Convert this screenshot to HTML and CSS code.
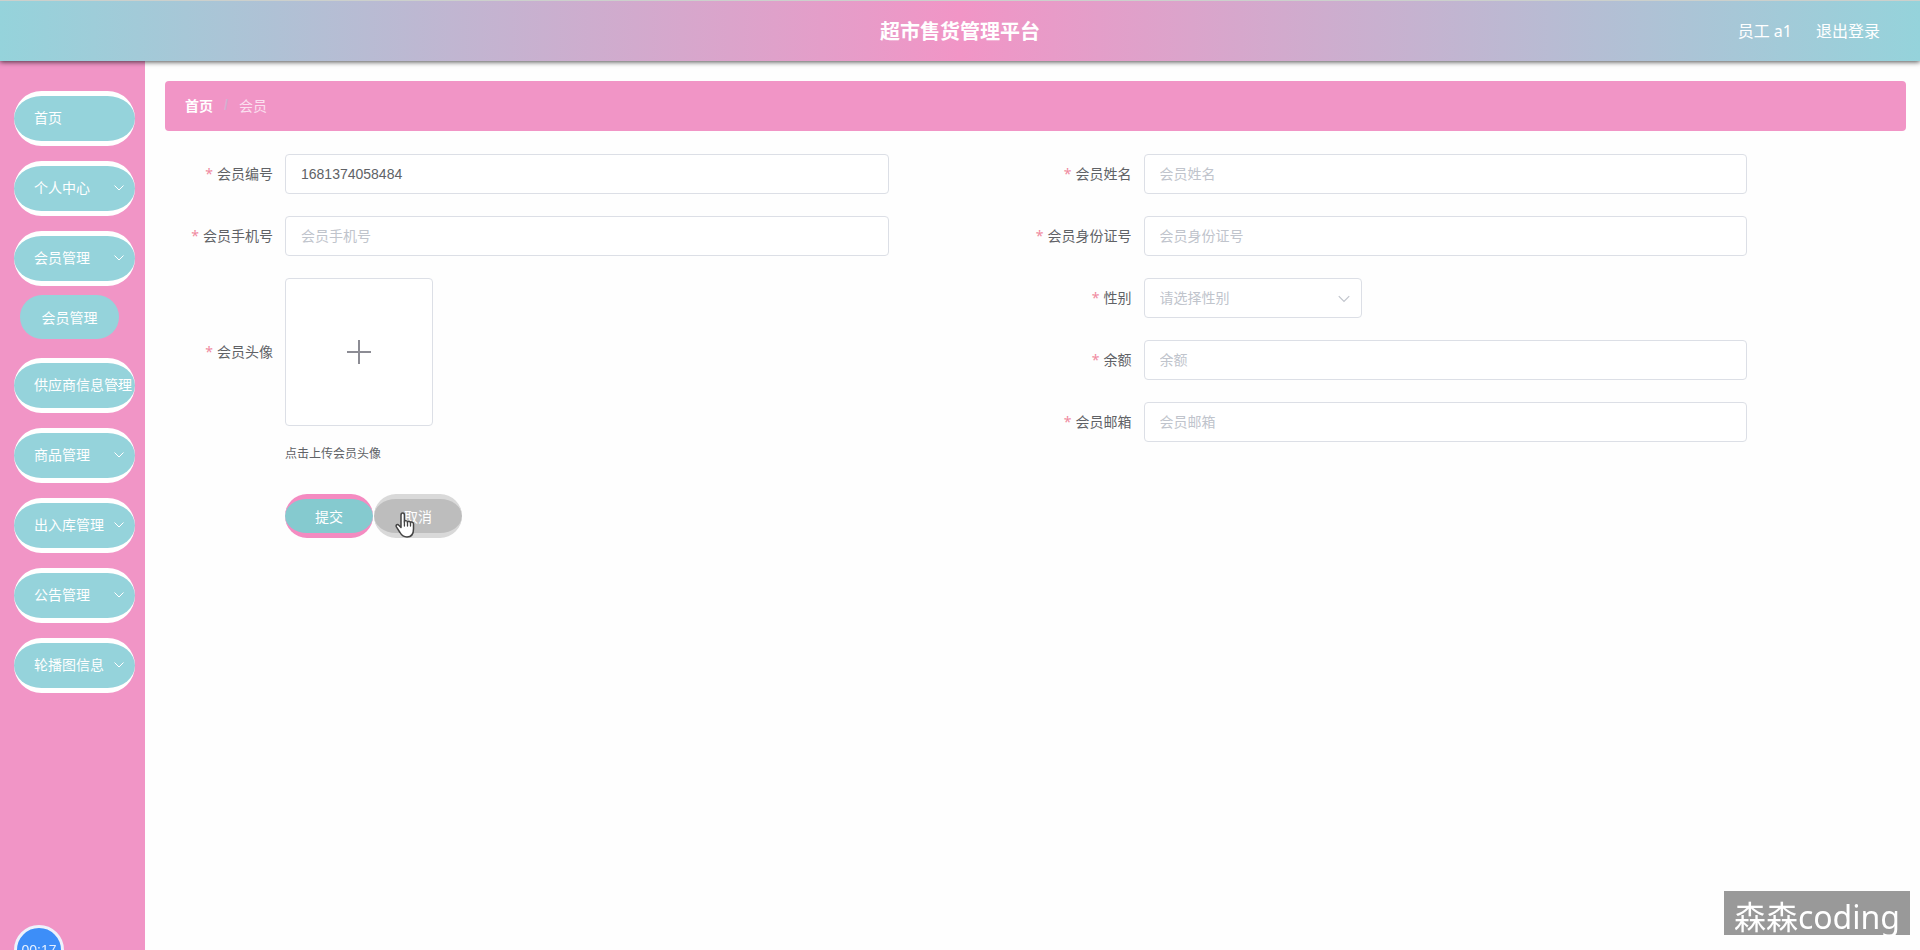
FILE: index.html
```html
<!DOCTYPE html>
<html lang="zh-CN">
<head>
<meta charset="utf-8">
<title>超市售货管理平台</title>
<link rel="stylesheet" href="styles.css">
</head>
<body>
<svg class="sprite" aria-hidden="true">
  <symbol id="chevron" viewBox="0 0 12 12"><path d="M1.500 3.500 6 8l4.500-4.500" fill="none" stroke="currentColor" stroke-width="1"/></symbol>
</svg>
<header class="topbar">
  <h1 class="topbar-title">超市售货管理平台</h1>
  <div class="topbar-user">
    <span>员工 a1</span>
    <a href="#logout">退出登录</a>
  </div>
</header>
<div class="layout">
  <nav class="sidebar">
    <ul class="menu">
      <li><a class="menu-item" href="#home">首页</a></li>
      <li><button type="button" class="menu-item">个人中心<svg class="menu-arrow"><use href="#chevron"/></svg></button></li>
      <li>
        <button type="button" class="menu-item">会员管理<svg class="menu-arrow"><use href="#chevron"/></svg></button>
        <a class="submenu-item" href="#member">会员管理</a>
      </li>
      <li><button type="button" class="menu-item">供应商信息管理<svg class="menu-arrow"><use href="#chevron"/></svg></button></li>
      <li><button type="button" class="menu-item">商品管理<svg class="menu-arrow"><use href="#chevron"/></svg></button></li>
      <li><button type="button" class="menu-item">出入库管理<svg class="menu-arrow"><use href="#chevron"/></svg></button></li>
      <li><button type="button" class="menu-item">公告管理<svg class="menu-arrow"><use href="#chevron"/></svg></button></li>
      <li><button type="button" class="menu-item">轮播图信息<svg class="menu-arrow"><use href="#chevron"/></svg></button></li>
    </ul>
  </nav>
  <main class="content">
    <div class="breadcrumb">
      <a href="#home">首页</a><span class="breadcrumb-sep">/</span><span class="breadcrumb-current">会员</span>
    </div>
    <form class="form">
      <div class="form-columns">
        <div class="form-column">
          <div class="field"><label for="no">会员编号</label><input id="no" type="text" value="1681374058484"></div>
          <div class="field"><label for="phone">会员手机号</label><input id="phone" type="text" placeholder="会员手机号"></div>
          <div class="field">
            <label for="avatar">会员头像</label>
            <button id="avatar" type="button" class="upload" aria-describedby="avatar-tip">
              <svg width="24" height="24" viewBox="0 0 24 24"><path d="M12 0v24M0 12h24" stroke="#8c8c94" stroke-width="2"/></svg>
            </button>
          </div>
          <p id="avatar-tip" class="upload-tip">点击上传会员头像</p>
        </div>
        <div class="form-column">
          <div class="field"><label for="name">会员姓名</label><input id="name" type="text" placeholder="会员姓名"></div>
          <div class="field"><label for="idcard">会员身份证号</label><input id="idcard" type="text" placeholder="会员身份证号"></div>
          <div class="field">
            <label for="sex">性别</label>
            <div class="select-wrap">
              <select id="sex"><option value="">请选择性别</option><option>男</option><option>女</option></select>
              <svg class="select-arrow"><use href="#chevron"/></svg>
            </div>
          </div>
          <div class="field"><label for="balance">余额</label><input id="balance" type="text" placeholder="余额"></div>
          <div class="field"><label for="mail">会员邮箱</label><input id="mail" type="text" placeholder="会员邮箱"></div>
        </div>
      </div>
      <div class="actions">
        <button type="submit" class="btn btn-primary">提交</button>
        <button type="button" class="btn btn-cancel">取消
          <svg class="cursor" width="20" height="26" viewBox="0 0 20 26"><path d="M6 15.500V3.200C6 .4 9.400.4 9.400 3.200V10c0-2 3.100-1.800 3.100.4 0-1.800 3-1.500 3 .6 0-1.500 3-1.300 3 1v5c0 4.500-2 8-6.500 8-4 0-5.500-1.800-7-4.500l-3.600-5.700c-1-2 1.200-3 2.400-1.600z" fill="#fff" stroke="#444" stroke-width="1.500" stroke-linejoin="round"/><path d="M9.400 10v4M12.500 10.400V14M15.500 11v3" stroke="#444" stroke-width="1.300" stroke-linecap="round"/></svg>
        </button>
      </div>
    </form>
  </main>
</div>
<div class="timer">00:17</div>
<div class="watermark">森森coding</div>
</body>
</html>
```
FILE: styles.css
```css
* { box-sizing: border-box; }

body {
  margin: 0;
  min-height: 100vh;
  display: flex;
  flex-direction: column;
  overflow: hidden;
  background: #fefefe;
  color: #606266;
  font-family: "Liberation Sans", "Noto Sans CJK SC", sans-serif;
  font-size: 14px;
}

a { color: inherit; text-decoration: none; }
button, input, select { font: inherit; color: inherit; }
button { cursor: pointer; }
.sprite { display: none; }

.topbar {
  position: relative;
  z-index: 1;
  display: grid;
  grid-template-columns: 1fr auto 1fr;
  align-items: center;
  height: 61px;
  padding: 0 40px;
  border-top: 1px solid #ccd0cc;
  background: linear-gradient(90deg, #95d3db, #f195c6 50%, #95d3db);
  box-shadow: 0 1px 5px rgba(0, 0, 0, 0.7);
  color: #fff;
}
.topbar-title { grid-column: 2; margin: 0; padding-top: 2px; font-size: 20px; line-height: 28px; }
.topbar-user {
  display: flex;
  justify-content: flex-end;
  gap: 24px;
  font-family: "Noto Sans", "Noto Sans CJK SC", sans-serif;
  font-size: 16px;
  line-height: 24px;
}

.layout { flex: 1; display: flex; }

.sidebar {
  flex: none;
  width: 145px;
  padding: 30px 10px 0 14px;
  background: #f195c6;
}
.menu {
  display: flex;
  flex-direction: column;
  gap: 15px;
  margin: 0;
  padding: 0;
  list-style: none;
}
.menu-item {
  position: relative;
  display: flex;
  align-items: center;
  width: 100%;
  height: 55px;
  padding: 0 0 3px 20px;
  border: solid #fff;
  border-width: 5px 0;
  border-radius: 28px;
  background: #95d3db;
  color: #fff;
  white-space: nowrap;
}
.menu-arrow { position: absolute; top: 16px; right: 10px; width: 12px; height: 12px; }
.submenu-item {
  display: flex;
  align-items: center;
  justify-content: center;
  width: 99px;
  height: 44px;
  margin: 9px 0 4px 6px;
  padding-bottom: 1px;
  border-radius: 22px;
  background: #95d3db;
  color: #fff;
}

.content { flex: 1; min-width: 0; padding: 20px 14px 20px 20px; }

.breadcrumb {
  display: flex;
  align-items: center;
  height: 50px;
  padding: 0 20px 2px;
  border-radius: 4px;
  background: #f195c6;
  color: #fff;
}
.breadcrumb a { font-weight: 700; }
.breadcrumb-sep { margin: 0 11px; color: #d3afd0; font-weight: 700; }
.breadcrumb-current { color: #fbe0f0; }

.form { padding: 23px 24px 0 0; }
.form-columns { display: grid; grid-template-columns: 1fr 1fr; }
.form-column { display: flex; flex-direction: column; gap: 22px; }
.field {
  display: grid;
  grid-template-columns: 108px 1fr;
  column-gap: 12px;
  align-items: center;
  padding-right: 135px;
}
.field label { padding-bottom: 2px; text-align: right; white-space: nowrap; }
.field label::before {
  content: "*";
  margin-right: 4px;
  color: #f08aa0;
  font-family: "Noto Sans", sans-serif;
  line-height: 1;
}
.field input, .field select {
  width: 100%;
  height: 40px;
  padding: 0 15px;
  border: 1px solid #dcdfe6;
  border-radius: 4px;
  background: #fff;
  outline: none;
}
.field input::placeholder { color: #c0c4cc; }
.select-wrap { position: relative; width: 218px; }
.field select { appearance: none; color: #c0c4cc; }
.select-arrow { position: absolute; top: 14px; right: 11px; width: 14px; height: 14px; color: #c0c4cc; pointer-events: none; }

.upload {
  display: flex;
  align-items: center;
  justify-content: center;
  width: 148px;
  height: 148px;
  padding: 0;
  border: 1px solid #dcdfe6;
  border-radius: 4px;
  background: #fff;
}
.upload-tip { margin: -4px 0 0 120px; font-size: 12px; line-height: 20px; }

.actions { display: flex; gap: 1px; padding: 30px 0 0 120px; }
.btn {
  position: relative;
  width: 88px;
  height: 44px;
  padding: 0;
  border: solid;
  border-width: 5px 0;
  border-radius: 22px;
  color: #fff;
}
.btn-primary { border-color: #f48bc1; background: #85cacf; }
.btn-cancel { border-color: #d9d9d9; background: #bdbdbd; }
.cursor { position: absolute; top: 13px; left: 21px; }

.timer {
  position: fixed;
  bottom: -25px;
  left: 14px;
  width: 50px;
  height: 50px;
  border: 3px solid #eef3fc;
  border-radius: 50%;
  background: #3d8ef8;
  color: #e4f0ff;
  font-size: 14px;
  line-height: 44px;
  text-align: center;
}
.watermark {
  position: fixed;
  right: 10px;
  bottom: 15px;
  height: 44px;
  padding: 0 10px;
  background: #999;
  color: #fff;
  font-family: "Noto Sans", "Noto Sans CJK SC", sans-serif;
  font-size: 32px;
  line-height: 52px;
}
```
